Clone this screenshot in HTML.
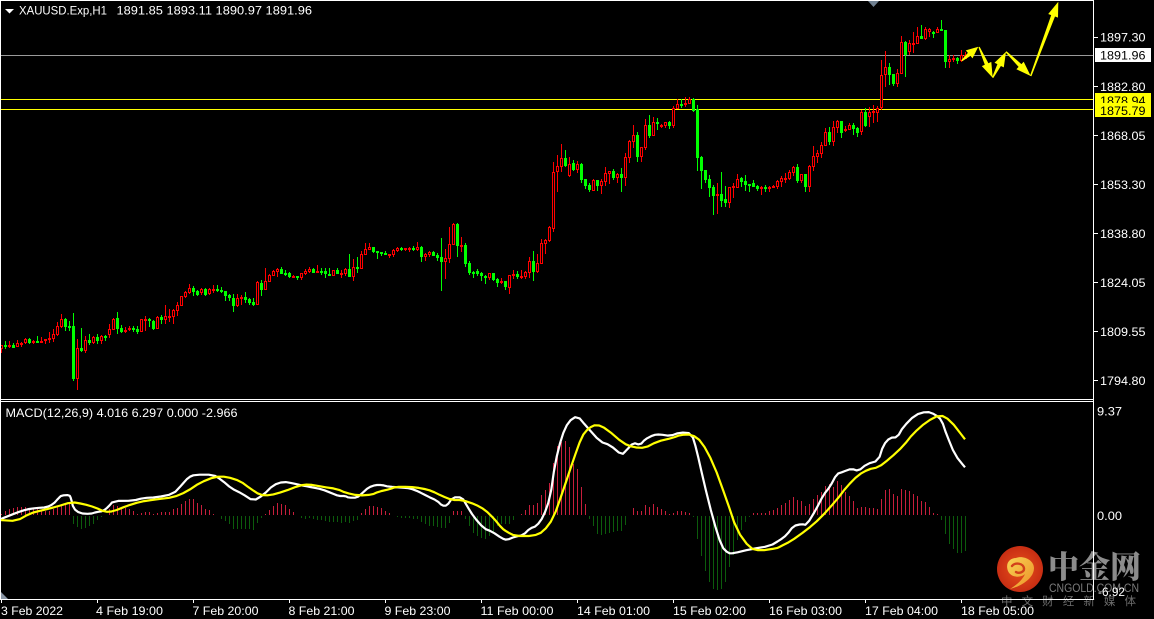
<!DOCTYPE html>
<html>
<head>
<meta charset="utf-8">
<title>XAUUSD.Exp,H1</title>
<style>
html,body{margin:0;padding:0;background:#000;width:1154px;height:619px;overflow:hidden}
svg{display:block;position:absolute;left:0;top:0}
text{font-family:"Liberation Sans",sans-serif;font-size:12px;fill:#fff}
.cj{font-family:"Liberation Sans","Noto Sans CJK SC",sans-serif}
</style>
</head>
<body>
<svg id="s" width="1154" height="619" viewBox="0 0 1154 619" xmlns="http://www.w3.org/2000/svg">
<rect width="1154" height="619" fill="#000"/>
<g id="lines" shape-rendering="crispEdges">
<rect x="1" y="55" width="1092" height="1" fill="#9a9a9a"/>
<rect x="1" y="99" width="1092" height="1" fill="#ffff00"/>
<rect x="1" y="109" width="1092" height="1" fill="#ffff00"/>
</g>
<g id="candles" shape-rendering="crispEdges"></g>
<g id="hist" shape-rendering="crispEdges"></g>
<polyline id="mw" fill="none" stroke="#fff" stroke-width="2.2" stroke-linejoin="round"/>
<polyline id="my" fill="none" stroke="#ffff00" stroke-width="2.2" stroke-linejoin="round"/>
<g id="arrows" fill="#ffff00"></g>

<!-- logo -->
<g>
<defs>
<radialGradient id="lg" cx="0.5" cy="0.5" r="0.55"><stop offset="0" stop-color="#e8501c"/><stop offset="1" stop-color="#c42a12"/></radialGradient>
<linearGradient id="ly" x1="0" y1="0" x2="1" y2="1"><stop offset="0" stop-color="#f8d455"/><stop offset="1" stop-color="#ec8f26"/></linearGradient>
</defs>
<circle cx="1020" cy="569" r="23" fill="url(#lg)"/>
<path d="M1008 571C1005 563 1010 558 1016 558C1023 555 1034 560 1034 568C1034 578 1022 586 1010 589C1018 584 1023 579 1025 574C1021 578 1011 578 1008 571Z" fill="url(#ly)"/>
<path d="M1012 566C1015 562 1024 563 1024 569C1024 572 1019 574 1016 572" fill="none" stroke="#d2401a" stroke-width="2.4" stroke-linecap="round"/>
<text x="1048" y="578" style="font-family:'Noto Serif CJK SC','Noto Sans CJK SC',serif;font-weight:900;font-size:31px;fill:#8c8c8c">中金网</text>
<text x="1049" y="592" textLength="90" lengthAdjust="spacingAndGlyphs" style="font-size:12px;fill:#7c7c7c">CNGOLD.COM.CN</text>
<text class="cj" x="1001" y="605" textLength="135" style="font-size:11.5px;fill:#6c6c6c;font-family:'Liberation Sans','Noto Sans CJK SC',sans-serif">中文财经新媒体</text>
</g>

<!-- frame -->
<g shape-rendering="crispEdges" fill="#fff">
<rect x="0" y="0" width="1094" height="1"/>
<rect x="0" y="0" width="1" height="600"/>
<rect x="1093" y="0" width="1" height="600"/>
<rect x="0" y="399" width="1094" height="1"/>
<rect x="0" y="401" width="1094" height="1"/>
<rect x="0" y="599" width="1094" height="1"/>
<rect x="1094" y="37" width="4" height="1"/>
<rect x="1094" y="86" width="4" height="1"/>
<rect x="1094" y="135" width="4" height="1"/>
<rect x="1094" y="184" width="4" height="1"/>
<rect x="1094" y="233" width="4" height="1"/>
<rect x="1094" y="282" width="4" height="1"/>
<rect x="1094" y="331" width="4" height="1"/>
<rect x="1094" y="380" width="4" height="1"/>
<rect x="1" y="600" width="1" height="3"/>
<rect x="97" y="600" width="1" height="3"/>
<rect x="193" y="600" width="1" height="3"/>
<rect x="289" y="600" width="1" height="3"/>
<rect x="385" y="600" width="1" height="3"/>
<rect x="481" y="600" width="1" height="3"/>
<rect x="577" y="600" width="1" height="3"/>
<rect x="673" y="600" width="1" height="3"/>
<rect x="769" y="600" width="1" height="3"/>
<rect x="865" y="600" width="1" height="3"/>
<rect x="961" y="600" width="1" height="3"/>
</g>
<polygon points="868,1 879,1 873.5,7" fill="#708090"/>
<polygon points="1,592 1,599 8,599" fill="#8a96a5"/>
<polygon points="5,9 14,9 9.5,13.5" fill="#fff"/>

<!-- header text -->
<text x="19" y="14.5" textLength="88" lengthAdjust="spacingAndGlyphs">XAUUSD.Exp,H1</text>
<text x="116.5" y="14.5" textLength="195.5" lengthAdjust="spacingAndGlyphs">1891.85 1893.11 1890.97 1891.96</text>
<text x="5.5" y="417" textLength="232" lengthAdjust="spacingAndGlyphs">MACD(12,26,9) 4.016 6.297 0.000 -2.966</text>

<!-- price axis -->
<text x="1100" y="41.5" textLength="45.5" lengthAdjust="spacingAndGlyphs">1897.30</text>
<rect x="1095" y="48" width="56" height="14" fill="#fff"/>
<text x="1100" y="59.5" textLength="45.5" lengthAdjust="spacingAndGlyphs" style="fill:#000">1891.96</text>
<text x="1100" y="91" textLength="45.5" lengthAdjust="spacingAndGlyphs">1882.80</text>
<rect x="1095" y="93" width="56" height="12" fill="#ffff00"/>
<text x="1100" y="105" textLength="45.5" lengthAdjust="spacingAndGlyphs" style="fill:#000">1878.94</text>
<rect x="1095" y="103" width="56" height="14" fill="#ffff00"/>
<text x="1100" y="115" textLength="45.5" lengthAdjust="spacingAndGlyphs" style="fill:#000">1875.79</text>
<text x="1100" y="140" textLength="45.5" lengthAdjust="spacingAndGlyphs">1868.05</text>
<text x="1100" y="189" textLength="45.5" lengthAdjust="spacingAndGlyphs">1853.30</text>
<text x="1100" y="238" textLength="45.5" lengthAdjust="spacingAndGlyphs">1838.80</text>
<text x="1100" y="287" textLength="45.5" lengthAdjust="spacingAndGlyphs">1824.05</text>
<text x="1100" y="336" textLength="45.5" lengthAdjust="spacingAndGlyphs">1809.55</text>
<text x="1100" y="385" textLength="45.5" lengthAdjust="spacingAndGlyphs">1794.80</text>
<text x="1097" y="415.5" textLength="25" lengthAdjust="spacingAndGlyphs">9.37</text>
<text x="1097" y="520" textLength="25" lengthAdjust="spacingAndGlyphs">0.00</text>
<text x="1098" y="596" textLength="27" lengthAdjust="spacingAndGlyphs">-6.92</text>

<!-- time axis -->
<text x="1" y="615" textLength="62" lengthAdjust="spacingAndGlyphs">3 Feb 2022</text>
<text x="96" y="615" textLength="67" lengthAdjust="spacingAndGlyphs">4 Feb 19:00</text>
<text x="192.5" y="615" textLength="66" lengthAdjust="spacingAndGlyphs">7 Feb 20:00</text>
<text x="288.5" y="615" textLength="66" lengthAdjust="spacingAndGlyphs">8 Feb 21:00</text>
<text x="384.5" y="615" textLength="66" lengthAdjust="spacingAndGlyphs">9 Feb 23:00</text>
<text x="480.5" y="615" textLength="73" lengthAdjust="spacingAndGlyphs">11 Feb 00:00</text>
<text x="577" y="615" textLength="73" lengthAdjust="spacingAndGlyphs">14 Feb 01:00</text>
<text x="673" y="615" textLength="73" lengthAdjust="spacingAndGlyphs">15 Feb 02:00</text>
<text x="769" y="615" textLength="73" lengthAdjust="spacingAndGlyphs">16 Feb 03:00</text>
<text x="865" y="615" textLength="73" lengthAdjust="spacingAndGlyphs">17 Feb 04:00</text>
<text x="961" y="615" textLength="73" lengthAdjust="spacingAndGlyphs">18 Feb 05:00</text>
</svg>
<script>
(function(){
var D="r345,349,345,353;g345,347,341,349;r345,347,341,348;g345,348,343,348;r343,347,340,347;r343,344,342,347;r339,343,338,344;g339,343,338,344;r341,343,340,344;g341,342,336,343;r341,342,337,343;r339,341,339,344;r338,340,332,343;r334,339,329,342;r326,335,322,336;r319,327,314,328;g319,327,318,331;g326,327,321,331;g326,379,313,381;r348,379,339,390;g348,351,328,352;r340,351,336,353;g340,343,334,345;r337,343,336,344;g337,341,334,344;r336,341,335,344;g336,337,335,341;r329,335,324,338;r319,330,318,330;g318,329,312,334;g328,332,325,333;r330,331,327,333;r328,330,326,331;g328,329,326,332;g329,332,326,334;r319,332,319,332;r319,320,316,331;g319,321,318,327;g321,329,320,330;r317,329,316,329;g317,320,315,324;r316,320,305,324;r316,317,309,322;r310,317,309,324;r305,311,302,316;r296,306,296,306;r292,297,291,298;r288,293,284,294;g288,292,286,296;g291,295,290,296;r289,293,288,295;g289,295,288,296;r289,294,288,295;r289,290,285,293;g289,291,285,292;g290,292,287,293;g291,296,291,301;g295,298,294,301;g298,306,294,312;r298,306,294,307;r297,299,295,305;g297,300,292,303;g299,303,298,305;g302,305,298,306;r282,305,281,305;g283,290,280,296;r281,290,268,290;"+
"r275,282,274,282;r271,276,270,276;r269,272,268,277;g269,274,267,274;g273,274,270,276;g273,277,272,278;r276,277,275,278;g276,278,276,280;r273,278,273,280;r271,274,269,275;r269,272,267,273;g269,273,268,273;r271,273,265,273;g271,272,268,275;g271,274,268,278;g274,275,268,276;r270,276,270,276;g270,274,268,274;r273,274,270,278;r269,274,268,276;g269,277,254,277;r267,277,259,281;g267,269,257,273;r254,269,251,269;r249,255,243,255;r247,250,243,250;g247,252,247,253;g251,253,251,259;g252,254,252,256;g253,255,251,255;r254,255,254,258;r250,255,249,257;r248,251,247,252;g248,250,247,251;r248,250,248,251;r248,250,247,252;g248,249,246,251;r247,250,242,251;g247,257,246,262;r254,257,253,261;r252,255,251,257;g252,256,251,256;g255,258,253,261;g257,262,238,291;r258,262,249,279;r244,259,227,263;r224,245,223,245;g224,246,223,257;r245,246,237,252;g245,264,243,267;g263,273,261,275;g272,274,271,278;g271,274,269,276;g273,276,272,281;g276,278,275,284;r273,278,273,280;g273,280,273,281;g279,283,278,287;r281,283,278,284;g281,287,281,290;r275,288,275,294;r274,276,270,279;g274,277,271,279;r276,277,270,279;r272,277,271,279;r261,273,257,278;g261,272,251,281;r263,272,254,273;r243,264,239,264;r240,244,239,254;r227,241,226,242;r172,229,162,232;r166,172,155,192;r158,167,144,172;g158,166,150,167;"+
"r164,176,157,177;g163,170,160,171;r164,170,161,173;g164,180,163,183;g179,186,179,189;g185,190,183,192;r180,191,179,191;g180,186,180,191;r181,186,179,194;r173,182,167,186;r171,174,171,184;g171,178,169,180;r174,178,173,183;g174,178,168,192;r157,178,153,186;r141,158,140,163;r135,142,125,148;g135,157,132,162;r147,157,147,162;r125,148,119,150;g125,136,115,138;r122,136,117,136;g122,124,118,130;r125,127,124,128;r122,126,122,128;g122,126,121,129;r108,126,106,128;r104,109,99,109;g104,105,99,108;r103,105,97,107;r99,104,97,104;g99,111,98,112;g109,158,105,171;g157,171,156,189;g170,180,170,183;g179,188,175,197;g187,196,185,215;r194,196,183,214;g194,201,172,207;g199,203,186,207;r187,203,187,208;r186,188,183,198;r179,188,174,188;g178,182,177,187;g181,185,175,191;g184,185,184,192;g183,187,180,187;g186,189,185,191;r187,189,186,195;g187,189,185,192;r187,189,186,192;r186,187,185,188;r181,187,180,189;r178,182,176,187;r178,179,173,183;r172,179,170,180;r167,173,166,176;g167,181,164,183;r174,181,174,183;g174,187,174,192;r166,187,165,192;r156,167,146,171;r153,157,150,163;r145,154,142,158;r132,146,128,146;g132,142,127,145;r127,142,121,146;r121,128,120,133;"+
"g121,133,121,138;r129,130,126,132;r125,130,123,130;g125,129,123,135;g128,133,127,137;r112,132,110,135;g112,126,108,127;r112,117,107,127;r111,113,105,123;r108,113,106,122;r75,108,60,110;r67,75,51,87;g67,75,63,85;g74,84,74,86;r73,84,69,87;r42,74,36,74;g42,55,41,77;r43,52,40,55;r43,44,32,53;r36,44,27,44;g36,39,25,39;r29,39,27,40;r29,32,28,37;g32,34,31,38;r29,33,27,33;g29,31,20,31;g30,62,30,68;r59,62,55,68;r58,59,55,62;g58,61,57,64;r55,61,50,62;r55,59,52,59";
var R="#ff0000",G="#00ff00",o="";
D.split(";").forEach(function(s,i){
  var c=s[0]=="r"?R:G,v=s.slice(1).split(",").map(Number),t=v[0],b=v[1],h=v[2],l=v[3],x=4*i,H=Math.max(b-t,2);
  if(h>t)h=t; if(l<t+H)l=t+H;
  o+='<rect x="'+(x+1)+'" y="'+h+'" width="1" height="'+(l-h)+'" fill="'+c+'"/>';
  o+='<rect x="'+x+'" y="'+t+'" width="3" height="'+H+'" fill="'+c+'"/>';
  if(c==R&&H>2)o+='<rect x="'+(x+1)+'" y="'+(t+1)+'" width="1" height="'+(H-2)+'" fill="#000"/>';
});
document.getElementById("candles").innerHTML=o;

var H=[1,4,6,7,8,8,8,7,6,6,5,4,4,6,8,10,11,11,-8,-11,-13,-12,-10,-8,-4,-1,0,6,10,9,7,7,6,4,1,2,3,3,1,2,3,3,3,6,7,11,14,16,16,12,10,6,5,1,0,-3,-5,-8,-13,-13,-13,-13,-13,-14,-7,-2,1,5,9,12,11,10,6,3,0,
-2,-3,-2,-3,-4,-4,-5,-6,-6,-6,-7,-6,-7,-5,-4,2,6,9,9,8,7,4,2,0,-1,-2,-2,-2,-3,-3,-6,-8,-10,-10,-11,-12,-12,-7,4,4,4,-3,-10,-17,-20,-22,-23,-20,-17,-10,
-8,-8,-8,-4,0,1,5,10,10,12,20,25,32,52,69,73,74,68,51,46,28,11,-3,-10,-18,-19,-18,-17,-16,-15,-15,-9,0,7,4,4,10,8,11,8,6,4,1,2,4,4,3,2,-1,-23,-40,-55,-66,-73,-74,-73,-66,-51,-39,-24,-14,-6,-1,2,2,2,2,4,5,7,
10,12,15,18,15,14,9,11,16,20,23,29,31,28,34,30,23,19,14,7,8,8,7,7,6,16,25,26,21,19,26,25,24,21,19,14,13,8,2,1,-4,-18,-28,-33,-37,-37,-35];
o="";
H.forEach(function(h,i){
  if(!h)return;
  var x=4*i+1;
  if(h>0)o+='<rect x="'+x+'" y="'+(515-h)+'" width="1" height="'+h+'" fill="#c81e3c"/>';
  else o+='<rect x="'+x+'" y="516" width="1" height="'+(-h)+'" fill="#0c5c0c"/>';
});
document.getElementById("hist").innerHTML=o;

function P(ox,oy,a){var r=[];for(var i=0;i<a.length;i+=2)r.push([ox+a[i]/3,oy+a[i+1]/3]);return r;}
function S(p){var r=[p[0]];for(var i=0;i<p.length-1;i++){var a=p[i],b=p[i+1];r.push([a[0]*.75+b[0]*.25,a[1]*.75+b[1]*.25]);r.push([a[0]*.25+b[0]*.75,a[1]*.25+b[1]*.75]);}r.push(p[p.length-1]);return r.map(function(q){return q[0].toFixed(1)+","+q[1].toFixed(1);}).join(" ");}
var w=[].concat(
P(0,400,[0,358,20,350,50,338,80,328,110,324,140,322,160,312,175,295,185,286,208,285,213,295,220,325,240,340,270,342,290,336,310,333,325,320,340,303,400,302,430,294,470,292,520,282,545,255,565,232,585,224,640,224,665,240,695,266,725,280,760,303,790,285,820,255,850,245,880,250,900,255]),
P(262,260,[130,678,150,682,180,688,210,700,230,708,250,708,260,713,285,713,300,700,320,682,340,675,360,675,380,680,420,683,445,685,470,695,495,708,525,722,540,737,555,737,572,712,600,712,615,738,635,770,665,805,690,815,720,835]),
P(500,400,[20,420,45,410,70,405,90,385,110,378,130,350,150,295,165,190,185,110,205,65,232,47,260,80,300,125,330,135,365,165,380,150,400,128,420,135,435,118,460,105,480,103,510,108,540,97,575,100,590,150,610,240,640,360,665,440,685,460,700,460,750,448,810,438]),
P(780,400,[0,420,20,405,40,378,65,372,80,375,110,325,130,285,150,260,170,222,190,215,215,206,235,213,260,192,295,182,310,135,330,113,352,112,370,80,405,45,440,34,465,43,485,60,500,105,525,165,555,202])
);
var y=[].concat(
P(0,400,[0,360,50,363,90,340,130,330,170,320,215,306,250,312,285,322,315,336,340,334,380,318,420,305,470,298,520,292,560,275,600,248,645,230,680,230,720,243,750,265,780,285,810,286,850,275,900,256]),
P(262,260,[140,673,180,680,225,687,250,698,290,707,330,704,350,695,385,687,400,681,440,680,480,685,510,693,540,708,570,720,600,720,640,733,670,750,695,775,720,805]),
P(500,400,[20,395,45,408,100,408,130,395,160,355,190,270,220,180,245,110,265,85,290,73,320,87,370,130,400,142,435,144,470,125,520,113,540,105,575,103,605,125,640,190,680,300,710,390,750,445,780,452,830,445]),
P(780,400,[0,440,30,425,80,390,120,355,170,300,200,260,235,225,265,208,295,202,330,175,370,138,400,100,440,65,480,44,510,60,555,118])
);
document.getElementById("mw").setAttribute("points",S(w));
document.getElementById("my").setAttribute("points",S(y));

function A(x1,y1,x2,y2){
  var dx=x2-x1,dy=y2-y1,L=Math.sqrt(dx*dx+dy*dy),ux=dx/L,uy=dy/L,nx=-uy,ny=ux,hl=Math.min(15,L*.55),nkx=x2-ux*hl,nky=y2-uy*hl;
  function p(a,b,s){return (a+nx*s).toFixed(1)+","+(b+ny*s).toFixed(1);}
  return '<polygon points="'+[p(x1,y1,.7),p(nkx,nky,2),p(nkx,nky,5.2),p(x2,y2,0),p(nkx,nky,-5.2),p(nkx,nky,-2),p(x1,y1,-.7)].join(" ")+'"/>';
}
document.getElementById("arrows").innerHTML=A(961.7,60.7,978.3,46.7)+A(979,47,992.7,77.7)+A(992.7,77.7,1006,51.7)+A(1006,51.7,1030.7,76)+A(1030.7,76,1058.3,1.7);
})();
</script>
</body>
</html>
